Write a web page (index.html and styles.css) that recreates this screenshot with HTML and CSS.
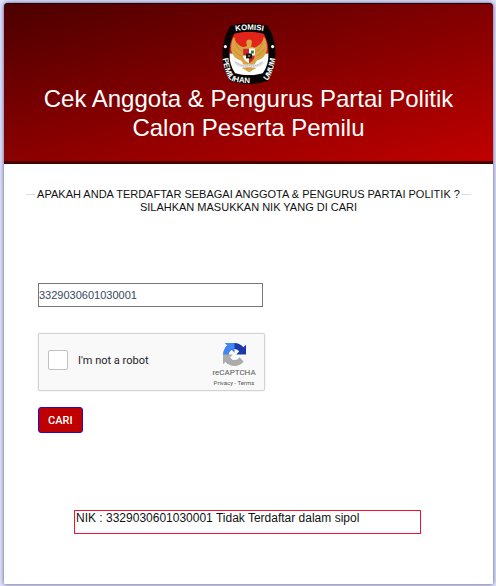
FILE: index.html
```html
<!DOCTYPE html>
<html lang="id">
<head>
<meta charset="utf-8">
<meta name="viewport" content="width=device-width, initial-scale=1">
<title>Cek Anggota &amp; Pengurus Partai Politik</title>
<link rel="stylesheet" href="styles.css">
</head>
<body>
<main class="card">
  <header class="header">
    <svg class="logo" viewBox="0 0 54 62" role="img" aria-label="Komisi Pemilihan Umum">
      <defs>
        <path id="arc-top" d="M9 9Q27 5 46 9"/>
        <path id="arc-bottom" d="M0 34C2 48 5 57 10 59Q27 63 44 59C49 57 52 48 54 34"/>
        <clipPath id="shield"><path d="M12 11Q27 7 42 11Q47 20 47 31Q47 43 41 51Q27 55 13 51Q7 43 7 31Q7 20 12 11Z"/></clipPath>
      </defs>
      <path d="M8 3Q27 -3 46 3Q54 16 54 31Q54 47 46 59Q27 65 8 59Q0 47 0 31Q0 16 8 3Z" fill="#080404"/>
      <g clip-path="url(#shield)">
        <path d="M0 0H54V31H0Z" fill="#e1251b"/>
        <path d="M0 31H54V62H0Z" fill="#fff"/>
      </g>
      <g fill="#d9a441">
        <path d="M25 23Q23 18 26 17Q30 16 30 20L29 24Q34 26 36 23Q41 21 42 14Q46 19 45 28Q43 37 35 38L32 43L34 47L30 46L27 50L24 46L20 47L22 43L19 38Q11 37 9 28Q8 19 12 14Q13 21 18 23Q21 26 25 23Z"/>
        <path d="M21 38H33L32 47L27 50L22 47Z"/>
      </g>
      <path d="M13 20Q16 28 21 30M11 26Q15 33 20 34M41 20Q38 28 33 30M43 26Q39 33 34 34M25 41V47M29 41V47" fill="none" stroke="#c48c32" stroke-width="1"/>
      <path d="M21 26H33V34Q32 38 27 41Q22 38 21 34Z" fill="#fff"/>
      <path d="M21 26H27V33H21ZM27 33H33Q33 38 27 41Z" fill="#c92b24"/>
      <path d="M29 28H32V31H29Z" fill="#238442"/>
      <path d="M24 31H30V36H24Z" fill="#161616"/>
      <path d="M26 33H28V34H26Z" fill="#e8bd44"/>
      <path d="M13 38Q18 43 27 42Q36 43 41 38L42 41Q36 47 27 45Q18 47 12 41Z" fill="#e1e1df"/>
      <path d="M14 40Q20 45 27 43Q34 45 40 40" fill="none" stroke="#aaa" stroke-width="1" stroke-dasharray="1 1"/>
      <circle cx="3" cy="24" r="1.6" fill="#fff"/>
      <circle cx="51" cy="24" r="1.6" fill="#fff"/>
      <text class="logo-text"><textPath href="#arc-top" startOffset="50%" text-anchor="middle">KOMISI</textPath></text>
      <text class="logo-text"><textPath href="#arc-bottom" startOffset="2%">PEMILIHAN</textPath></text>
      <text class="logo-text"><textPath href="#arc-bottom" startOffset="98%" text-anchor="end">UMUM</textPath></text>
    </svg>
    <h1 class="title">Cek Anggota &amp; Pengurus Partai Politik<br>Calon Peserta Pemilu</h1>
  </header>
  <div class="content">
    <div class="intro">
      <p class="intro-text">APAKAH ANDA TERDAFTAR SEBAGAI ANGGOTA &amp; PENGURUS PARTAI POLITIK ?<br>SILAHKAN MASUKKAN NIK YANG DI CARI</p>
    </div>
    <form class="form">
      <input class="nik" type="text" value="3329030601030001" aria-label="NIK">
      <div class="captcha">
        <input class="captcha-box" id="robot" type="checkbox">
        <label class="captcha-label" for="robot">I'm not a robot</label>
        <div class="captcha-brand">
          <svg class="captcha-icon" viewBox="0 0 64 64" aria-hidden="true">
            <path d="M64 32V4.700L56.800 11.850C51 4.700 42 0 32 0C21.700 0 12.400 5 6.600 12.700L18.300 24.600A15.500 15.500 0 0 1 23 19.250C25 17.700 28 16.350 32 16.350C37.500 16.350 42.400 19.500 45 23.650L36.700 32Z" fill="#1c3aa9"/>
            <path d="M32 0H4.700L11.850 7.200C4.700 13 0 22 0 32C0 42.300 5 51.600 12.700 57.400L24.600 45.700A15.500 15.500 0 0 1 19.250 41C17.700 39 16.350 36 16.350 32C16.350 26.500 19.500 21.600 23.650 19L32 27.300Z" fill="#4285f4"/>
            <path d="M0 32V59.300L7.200 52.150C13 59.300 22 64 32 64C42.300 64 51.600 59 57.400 51.300L45.700 39.400A15.500 15.500 0 0 1 41 44.750C39 46.300 36 47.650 32 47.650C26.500 47.650 21.600 44.500 19 40.350L27.300 32Z" fill="#ababab"/>
          </svg>
          <span class="captcha-name">reCAPTCHA</span>
          <span class="captcha-links"><a href="#">Privacy</a> - <a href="#">Terms</a></span>
        </div>
      </div>
      <button class="submit" type="submit">CARI</button>
    </form>
    <output class="result">NIK : 3329030601030001 Tidak Terdaftar dalam sipol</output>
  </div>
</main>
</body>
</html>
```
FILE: styles.css
```css
* {
  box-sizing: border-box;
}

body {
  margin: 0;
  padding: 3px 3px 2px 4px;
  background: #dfe1fb;
  font-family: "Liberation Sans", Arial, sans-serif;
  color: #111;
}

.card {
  background: #fff;
  border-radius: 4px 4px 1px 1px;
  box-shadow: 0 0 4px #50507c;
}

.header {
  display: flex;
  flex-direction: column;
  align-items: center;
  padding: 20px 16px 19px;
  border-bottom: 3px solid #4b0000;
  border-radius: 4px 4px 0 0;
  background: linear-gradient(165deg, #4b0000, #c00000);
  box-shadow: inset 0 1px #240008;
}

.logo {
  width: 54px;
  height: 61px;
}

.logo-text {
  font-size: 8px;
  font-weight: bold;
  fill: #fff;
}

.title {
  margin: 0;
  font-size: 24px;
  font-weight: normal;
  line-height: 29px;
  text-align: center;
  color: #fff;
}

.content {
  padding: 24px 22px 50px;
}

.intro {
  display: flex;
  justify-content: center;
  gap: 2px;
}

.intro::before,
.intro::after {
  content: "";
  flex: 0 0 9px;
  height: 1px;
  margin-top: 6px;
  background: #d9dce6;
}

.intro-text {
  margin: 0;
  font-size: 11px;
  line-height: 13px;
  text-align: center;
}

.form {
  display: flex;
  flex-direction: column;
  align-items: flex-start;
  padding: 69px 12px 0;
}

.nik {
  width: 225px;
  max-width: 100%;
  height: 24px;
  padding: 0;
  border: 1px solid #767676;
  border-radius: 0;
  background: #fff;
  font: 11px "Liberation Sans", Arial, sans-serif;
  color: #34495e;
}

.captcha {
  display: flex;
  align-items: center;
  width: 227px;
  max-width: 100%;
  height: 58px;
  margin-top: 26px;
  padding-left: 9px;
  border: 1px solid #d3d3d3;
  border-radius: 2px;
  background: #f9f9f9;
  box-shadow: 0 0 2px #ddd;
  font-family: Roboto, sans-serif;
}

.captcha-box {
  appearance: none;
  flex: none;
  width: 20px;
  height: 20px;
  margin: 0 10px 4px 0;
  border: 1px solid #c1c1c1;
  border-radius: 2px;
  background: #fff;
}

.captcha-label {
  flex: 1;
  padding-bottom: 4px;
  font-size: 11px;
  color: #222;
}

.captcha-brand {
  display: flex;
  flex-direction: column;
  align-items: center;
  width: 60px;
  padding-top: 5px;
  color: #555;
}

.captcha-icon {
  width: 23px;
  height: 23px;
}

.captcha-name {
  font-size: 8px;
  line-height: 13px;
}

.captcha-links {
  font-size: 6px;
  line-height: 8px;
}

.captcha-links a {
  color: inherit;
  text-decoration: none;
}

.submit {
  height: 26px;
  margin-top: 16px;
  padding: 0 9px;
  border: 1px solid #1a0fd0;
  border-radius: 3px;
  background: #c00000;
  font: 500 11px Roboto, sans-serif;
  color: #fff;
}

.result {
  display: block;
  margin: 77px 50px 0 48px;
  height: 24px;
  padding: 0 1px;
  border: 1px solid #f01432;
  font-size: 12px;
  line-height: 14px;
}
```
